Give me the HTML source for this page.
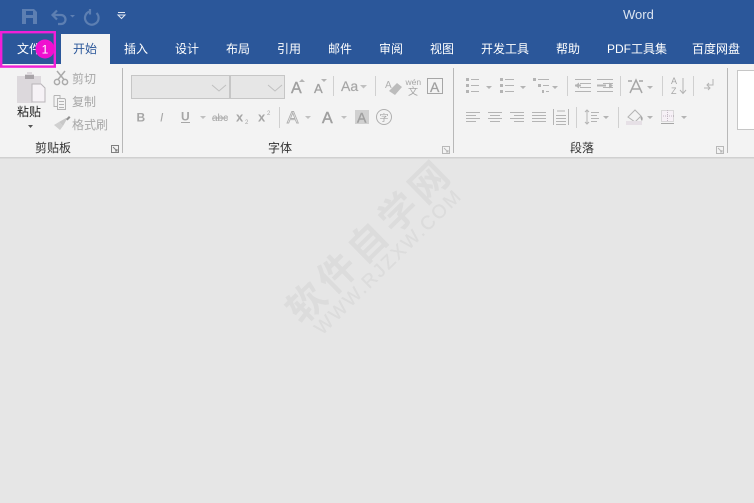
<!DOCTYPE html>
<html><head><meta charset="utf-8">
<style>
html,body{margin:0;padding:0;width:754px;height:503px;overflow:hidden;background:#e6e6e6}
svg{display:block}
text{font-family:"Liberation Sans","Noto Sans CJK SC",sans-serif}
.tab{font-size:12px;fill:#fff}
.dis{font-size:12px;fill:#a8a8a8}
.lab{font-size:12px;fill:#333}
.l{stroke:#b4b4b4;stroke-width:1;fill:none}
.s{stroke:#d0d0d0;stroke-width:1}
.d{fill:#b4b4b4}
.g{font-weight:bold;fill:#a6a6a6}
</style></head><body>
<svg width="754" height="503" viewBox="0 0 754 503" xmlns="http://www.w3.org/2000/svg">
<rect width="754" height="503" fill="#e6e6e6"/>
<rect width="754" height="64" fill="#2b579a"/>
<rect y="64" width="754" height="93" fill="#f3f3f3"/>
<rect y="157" width="754" height="1.500" fill="#d0d0d0"/>

<!-- QAT -->
<path d="M22 9h12l3 3v12H22z" fill="#5d7fb2"/>
<rect x="26" y="11" width="7" height="4" fill="#2b579a"/>
<rect x="26" y="18" width="7" height="6" fill="#2b579a"/>
<g fill="none" stroke="#5d7fb2" stroke-width="2.200">
<path d="M53 15h8a4.500 4.500 0 0 1 0 9h-3M57 10.500l-4.500 4.500 4.500 4.500"/>
<path d="M89.500 11.500a6.800 6.800 0 1 0 7 1.500M90 9v5.500"/>
</g>
<path d="M70 15h5l-2.500 2.500z" fill="#5d7fb2"/>
<path d="M118 12.500h7" stroke="#dfe6f1" stroke-width="1"/>
<path d="M118 15l3.500 3.500 3.500-3.500z" fill="none" stroke="#dfe6f1"/>
<text x="623" y="19" font-size="13" fill="#dbe4f0">Word</text>

<!-- tabs -->
<rect x="61" y="34" width="49" height="30" fill="#f3f3f3"/>
<text class="tab" x="17" y="53">文件</text>
<text x="73" y="53" font-size="12" fill="#2b579a">开始</text>
<text class="tab" x="124" y="53">插入</text>
<text class="tab" x="175" y="53">设计</text>
<text class="tab" x="226" y="53">布局</text>
<text class="tab" x="277" y="53">引用</text>
<text class="tab" x="328" y="53">邮件</text>
<text class="tab" x="379" y="53">审阅</text>
<text class="tab" x="430" y="53">视图</text>
<text class="tab" x="481" y="53">开发工具</text>
<text class="tab" x="556" y="53">帮助</text>
<text class="tab" x="607" y="53">PDF工具集</text>
<text class="tab" x="692" y="53">百度网盘</text>

<!-- highlight + badge -->
<rect x="1.200" y="32.200" width="53.600" height="34.400" fill="none" stroke="#f01fd8" stroke-width="2.400"/>
<circle cx="45" cy="49" r="9.500" fill="#f010d0"/>
<text x="45" y="53.500" font-size="12" fill="#fff" text-anchor="middle">1</text>

<!-- clipboard -->
<path d="M17 76h8v-2h2v-2h5v2h2v2h7v8h-9v19H17z" fill="#dcd8dc"/>
<rect x="25" y="75" width="9" height="4" fill="#a8a4a8"/>
<path d="M32 84h9l4 4v14H32z" fill="#f6f2f6" stroke="#b8b4b8"/>
<text x="17" y="116" font-size="12" fill="#222">粘贴</text>
<path d="M28 125h5l-2.500 3z" fill="#555"/>
<g fill="none" stroke="#aaaaaa" stroke-width="1.500">
<circle cx="57" cy="82" r="2.600"/><circle cx="65" cy="82" r="2.600"/>
<path d="M58 79.500l7-8.500M64 79.500l-7-8.500"/>
</g>
<g class="l">
<path d="M54 95.500h6v3M54 95.500v11h3M57.500 98.500h7l1 1v10h-8z"/><path d="M59 101.500h5M59 104.500h5M59 107.500h5"/>
</g>
<path d="M59 122l7-4 1 1-4 7z" fill="#c8c8c8"/>
<path d="M66 119l3-3 1.500 1.500-3 3z" fill="#909090"/>
<path d="M54 125l5-3 4 4-3 4z" fill="#d0d0d0"/>
<text class="dis" x="72" y="83">剪切</text>
<text class="dis" x="72" y="106">复制</text>
<text class="dis" x="72" y="129">格式刷</text>
<text class="lab" x="35" y="152">剪贴板</text>

<!-- separators -->
<path d="M122.500 68v85M453.500 68v85M727.500 68v85" stroke="#b8b8b8" stroke-width="1"/>

<!-- font combo -->
<rect x="131.500" y="75.500" width="98" height="23" fill="#e6e6e6" stroke="#c6c6c6"/>
<rect x="230.500" y="75.500" width="54" height="23" fill="#e6e6e6" stroke="#c6c6c6"/>
<path d="M212 85l7 6 7-6M268 85l7 6 7-6" fill="none" stroke="#c0c0c0"/>

<text x="291" y="93" font-size="16" fill="#a0a0a0" stroke="#a0a0a0" stroke-width=".4">A</text>
<path d="M299 82h6l-3-3z" class="d"/>
<text x="314" y="93" font-size="13" fill="#a0a0a0" stroke="#a0a0a0" stroke-width=".3">A</text>
<path d="M321 79h6l-3 3z" class="d"/>
<path class="s" d="M333.500 76v20M375.500 76v20M279.500 107v21"/>
<text x="341" y="91" font-size="14" fill="#a6a6a6" stroke="#a6a6a6" stroke-width=".2">Aa</text>
<path d="M360 85h7l-3.500 3.500z" fill="#c0c0c0"/>
<text x="385" y="88" font-size="10" fill="#b0b0b0">A</text>
<path d="M389 91l8-8 5 4-7 8z" fill="#bcbcbc"/>
<text x="405.500" y="85" font-size="8.500" fill="#a6a6a6">wén</text>
<text x="408" y="95" font-size="10" fill="#a6a6a6">文</text>
<rect x="427.500" y="78.500" width="15" height="15" fill="none" stroke="#a6a6a6"/>
<text x="430" y="92" font-size="14" fill="#a0a0a0" stroke="#a0a0a0" stroke-width=".3">A</text>

<text x="136.500" y="121.500" font-size="12" class="g">B</text>
<text x="160" y="121.500" font-size="12" font-style="italic" fill="#a6a6a6">I</text>
<text x="181" y="120.500" font-size="12" class="g">U</text>
<path d="M181 122.500h9" stroke="#a6a6a6"/>
<path d="M200 116h6l-3 3z" fill="#c0c0c0"/>
<text x="212" y="121" font-size="10" fill="#a6a6a6">abc</text>
<path d="M212 118h16" stroke="#a6a6a6"/>
<text x="236" y="121.500" font-size="13" class="g">x</text>
<text x="245" y="124" font-size="6" fill="#a6a6a6">2</text>
<text x="258" y="121.500" font-size="13" class="g">x</text>
<text x="267" y="115" font-size="6" fill="#a6a6a6">2</text>

<text x="287" y="123" font-size="17" fill="#f3f3f3" stroke="#b0b0b0" stroke-width=".9">A</text>
<path d="M305 116h6l-3 3z" fill="#c0c0c0"/>
<text x="322" y="123" font-size="16" fill="#a0a0a0" stroke="#a0a0a0" stroke-width=".5">A</text>
<path d="M341 116h6l-3 3z" fill="#c0c0c0"/>
<rect x="355" y="110" width="14" height="14" fill="#d0d0d0"/>
<text x="357" y="122.500" font-size="14" fill="#a0a0a0" stroke="#a0a0a0" stroke-width=".4">A</text>
<circle cx="384" cy="117" r="7.500" fill="none" stroke="#b0b0b0"/>
<text x="379.500" y="121" font-size="9" fill="#a6a6a6">字</text>
<text class="lab" x="268" y="152">字体</text>

<!-- launchers -->
<g fill="none">
<path d="M111.500 145.500v7h7v-7zM113 147l4 4M117 149v2h-2" stroke="#808080"/>
<path d="M442.500 146.500v7h7v-7zM444 148l4 4M448 150v2h-2" stroke="#b8b8b8"/>
<path d="M716.500 146.500v7h7v-7zM718 148l4 4M722 150v2h-2" stroke="#b8b8b8"/>
</g>

<!-- paragraph row 1 -->
<g class="l">
<path d="M471 79.500h8M471 85.500h8M471 91.500h8M505 79.500h9M505 85.500h9M505 91.500h9M538 79.500h11M543 85.500h6M546 91.500h3"/>
<path d="M575 79.500h16M580 83.500h11M580 87.500h11M575 91.500h16M597 79.500h16M603 83.500h10M603 87.500h10M597 91.500h16"/>
</g>
<g class="d"><rect x="466" y="78" width="3" height="3"/><rect x="466" y="84" width="3" height="3"/><rect x="466" y="90" width="3" height="3"/>
<rect x="500" y="78" width="3" height="3"/><rect x="500" y="84" width="3" height="3"/><rect x="500" y="90" width="3" height="3"/>
<rect x="533" y="78" width="3" height="3"/><rect x="538" y="84" width="3" height="3"/><rect x="542" y="90" width="2" height="3"/>
<path d="M575 85.500l4-3v6zM613 85.500l-4-3v6zM597 84.500h9v2h-9z"/>
<path d="M575 84.500h6v2h-6z"/>
<path d="M486 86h6l-3 3zM520 86h6l-3 3zM552 86h6l-3 3zM647 86h6l-3 3zM603 116h6l-3 3zM647 116h6l-3 3zM681 116h6l-3 3z"/>
</g>
<path class="s" d="M567.500 76v20M620.500 76v20M662.500 76v20M693.500 76v20M576.500 107v21M618.500 107v21"/>
<g fill="none" stroke="#a6a6a6" stroke-width="1.500">
<path d="M630 93l6-13 6 13M632 89h8"/>
<path d="M628 81h4M643 81h-4"/>
</g>
<text x="671" y="84" font-size="9" fill="#a6a6a6">A</text>
<text x="671" y="94" font-size="9" fill="#a6a6a6">Z</text>
<path d="M683 78v15M680 90l3 3.500 3-3.500" class="l"/>
<path d="M713 79v6h-6M709 83l-2 2 2 2M704 88h6M708 86l2 2-2 2" class="l"/>

<!-- paragraph row 2 -->
<g class="l">
<path d="M466 112.500h14M466 115.500h10M466 118.500h14M466 121.500h10"/>
<path d="M488 112.500h14M490 115.500h10M488 118.500h14M490 121.500h10"/>
<path d="M510 112.500h14M514 115.500h10M510 118.500h14M514 121.500h10"/>
<path d="M532 112.500h14M532 115.500h14M532 118.500h14M532 121.500h14"/>
<path d="M553.500 109v16M568.500 109v16M556 115.500h10M556 118.500h10M556 121.500h10M556 124.500h10M557 111h8"/>
<path d="M587 110v14M585 112l2-2 2 2M585 122l2 2 2-2M591 112.500h8M591 115.500h6M591 118.500h8M591 121.500h6"/>
</g>
<path d="M628 117l7-7 6 6-6 6z" fill="#f3f3f3" stroke="#b4b4b4"/>
<path d="M641 116c2 1 2 3 1 5-1-1-2-3-1-5z" fill="#a6a6a6"/>
<rect x="626" y="121" width="16" height="4" fill="#e6e0e6"/>
<rect x="661.500" y="110.500" width="12" height="11" fill="#f6f0f6" stroke="#bdbdbd" stroke-dasharray="1 1"/>
<path d="M667.500 110v12M661 116h13" stroke="#c4b8c4" stroke-dasharray="1 1"/>
<path d="M661 123.500h13" stroke="#a6a6a6"/>
<text class="lab" x="570" y="152">段落</text>

<!-- styles box -->
<rect x="737.500" y="70.500" width="20" height="59" fill="#fff" stroke="#c6c6c6"/>

<!-- watermark -->
<text transform="translate(368 243) rotate(-44.500)" x="2.500" y="13" text-anchor="middle" font-size="38" font-weight="bold" letter-spacing="5" fill="#dcdcdc" style="font-family:'Noto Sans CJK SC',sans-serif">软件自学网</text>
<text transform="translate(387 262) rotate(-44.500)" x="1" y="7" text-anchor="middle" font-size="19" fill="#dcdcdc" stroke="#dcdcdc" stroke-width=".3" letter-spacing="2">WWW.RJZXW.COM</text>
</svg>
</body></html>
